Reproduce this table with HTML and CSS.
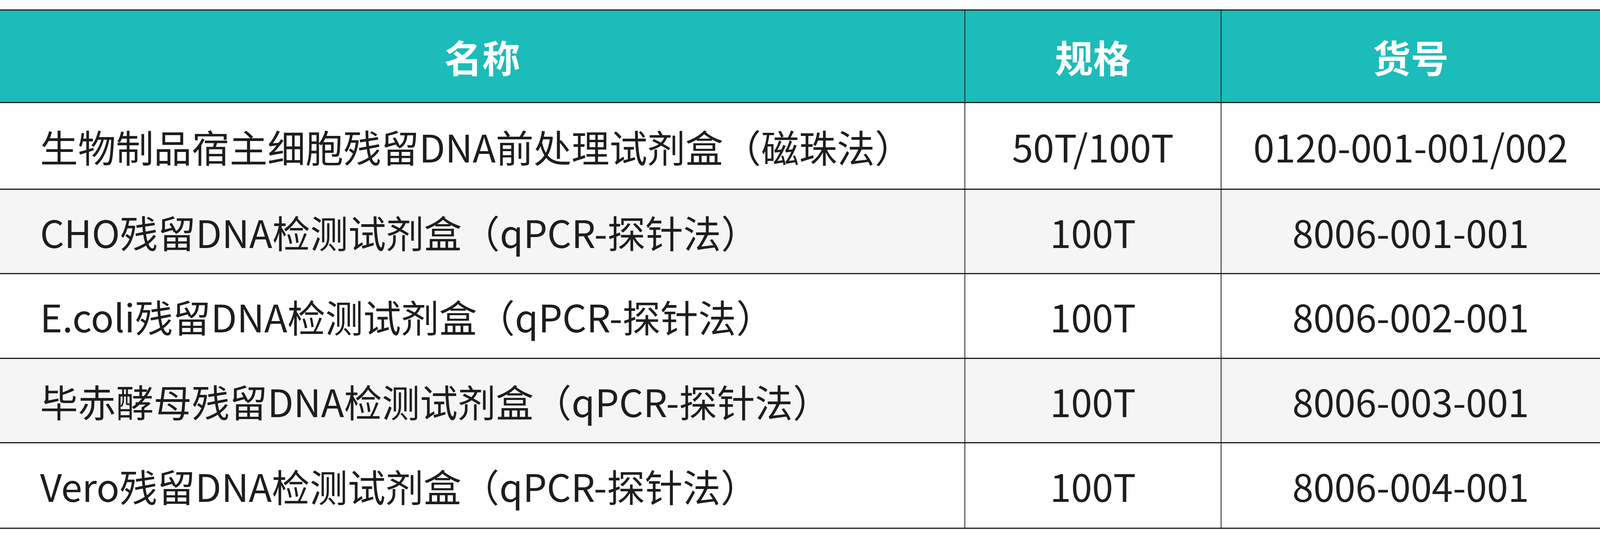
FILE: index.html
```html
<!DOCTYPE html>
<html lang="zh-CN">
<head>
<meta charset="utf-8">
<title>产品列表</title>
<link rel="stylesheet" href="styles.css">
</head>
<body>
<div class="table">
  <div class="row head">
    <div class="cell c1">名称</div>
    <div class="cell c2">规格</div>
    <div class="cell c3">货号</div>
  </div>
  <div class="row r1">
    <div class="cell c1">生物制品宿主细胞残留DNA前处理试剂盒（磁珠法）</div>
    <div class="cell c2">50T/100T</div>
    <div class="cell c3">0120-001-001/002</div>
  </div>
  <div class="row r2 alt">
    <div class="cell c1">CHO残留DNA检测试剂盒（qPCR-探针法）</div>
    <div class="cell c2">100T</div>
    <div class="cell c3">8006-001-001</div>
  </div>
  <div class="row r3">
    <div class="cell c1">E.coli残留DNA检测试剂盒（qPCR-探针法）</div>
    <div class="cell c2">100T</div>
    <div class="cell c3">8006-002-001</div>
  </div>
  <div class="row r4 alt">
    <div class="cell c1">毕赤酵母残留DNA检测试剂盒（qPCR-探针法）</div>
    <div class="cell c2">100T</div>
    <div class="cell c3">8006-003-001</div>
  </div>
  <div class="row r5">
    <div class="cell c1">Vero残留DNA检测试剂盒（qPCR-探针法）</div>
    <div class="cell c2">100T</div>
    <div class="cell c3">8006-004-001</div>
  </div>
</div>
</body>
</html>
```

FILE: styles.css
```css
html, body {
  margin: 0;
  padding: 0;
  background: #ffffff;
}

body {
  padding-top: 24px;
  font-family: "Noto Sans CJK SC", "Noto Sans", sans-serif;
  color: #1d1d1b;
}

.table {
  width: 100%;
  border-top: 3px solid #1d1d1b;
}

.row {
  display: grid;
  grid-template-columns: 60.28% 16.01% 23.71%;
  border-bottom: 3px solid #1d1d1b;
  height: 214px;
}

.row.head {
  height: 234px;
  background: #1bbcb9;
  color: #ffffff;
  font-weight: 700;
}

.row.r1 { height: 219px; }
.row.r2 { height: 213px; }
.row.r3 { height: 214px; }
.row.r4 { height: 213px; }
.row.r5 { height: 216px; }

.row.alt {
  background: #f5f5f5;
}

.cell {
  display: flex;
  align-items: center;
  justify-content: center;
  font-size: 2.37vw;
  line-height: 1;
  white-space: nowrap;
}

.cell.c2,
.cell.c3 {
  border-left: 2px solid #1d1d1b;
}

.row:not(.head) .cell.c1 {
  justify-content: flex-start;
  padding-left: 2.5vw;
}
```
